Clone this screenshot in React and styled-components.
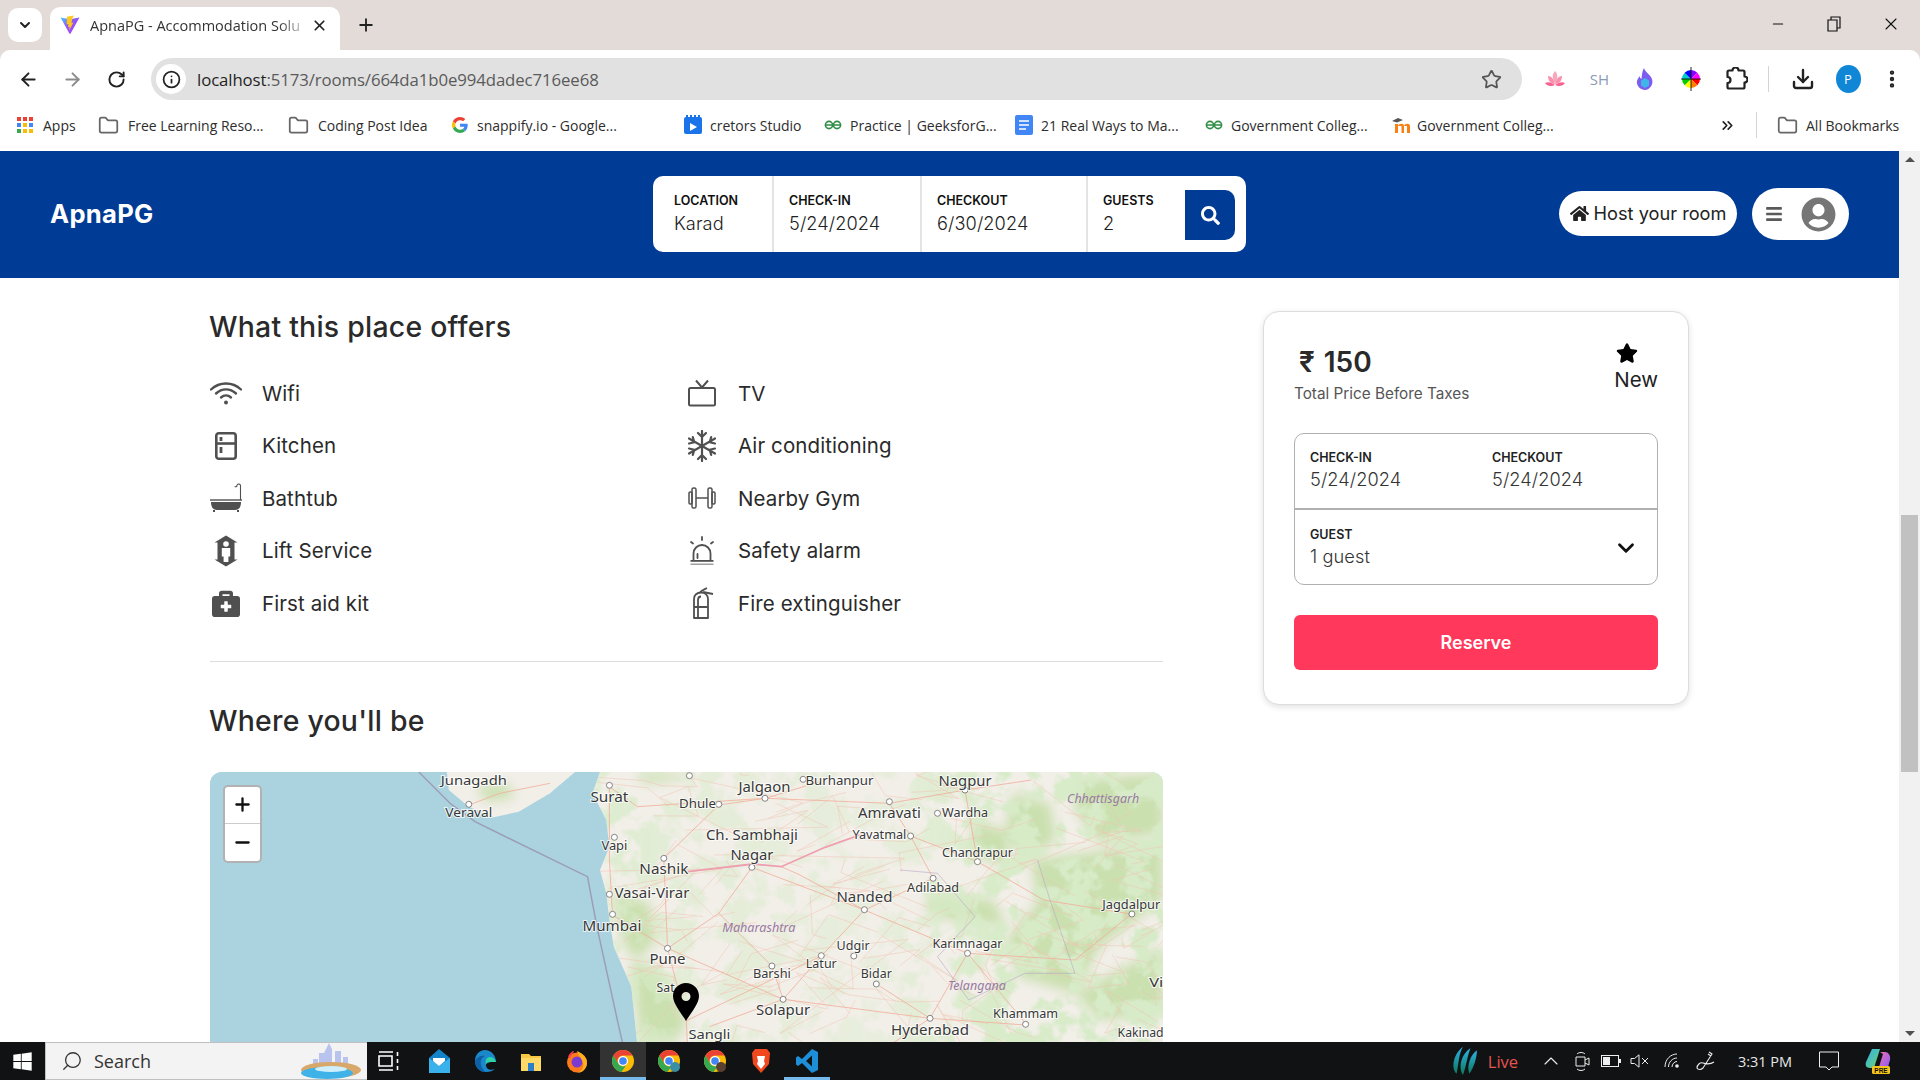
import React from "react";
import styled, { createGlobalStyle } from "styled-components";
import {
  ArrowLeft, ArrowRight, RotateCw, Star, Download, EllipsisVertical, X, Plus, ChevronDown,
  Folder, Info, Minus, ChevronsRight, ChevronUp, Search as SearchLine,
} from "lucide-react";
import { FaBriefcaseMedical, FaHome, FaSearch, FaStar, FaUserCircle, FaBars, FaWindows } from "react-icons/fa";

const Global = createGlobalStyle`
  html, body { margin: 0; padding: 0; width: 1920px; height: 1080px; overflow: hidden; background: #fff; }
  * { box-sizing: border-box; }
  #root { width: 1920px; height: 1080px; }
`;

const UI = `"Inter", "Noto Sans", sans-serif`;
const SYS = `"Open Sans", "Noto Sans", sans-serif`;

const Screen = styled.div`display:flex;flex-direction:column;width:1920px;height:1080px;overflow:hidden;`;

/* Browser chrome */
const TabStrip = styled.div`display:flex;height:50px;flex:none;background:#e3dbd8;`;
const TabMenu = styled.div`width:34px;height:34px;margin:8px 8px 0 8px;border-radius:10px;background:#fff;display:flex;align-items:center;justify-content:center;color:#222;`;
const Tab = styled.div`width:290px;height:43px;margin-top:7px;background:#fff;border-radius:10px 10px 0 0;display:flex;align-items:center;padding:0 12px 7px 10px;font:400 14.5px ${SYS};color:#333;`;
const TabTitle = styled.span`flex:1;margin-left:10px;white-space:nowrap;overflow:hidden;-webkit-mask-image:linear-gradient(90deg,#000 85%,transparent);mask-image:linear-gradient(90deg,#000 85%,transparent);`;
const NewTab = styled.div`width:26px;height:26px;margin:12px 0 0 13px;color:#222;display:flex;align-items:center;justify-content:center;`;
const WinControls = styled.div`margin-left:auto;display:flex;height:48px;`;
const WinBtn = styled.div`width:${p=>p.$w}px;display:flex;align-items:center;justify-content:center;color:#111;`;

const Toolbar = styled.div`height:56px;flex:none;display:flex;align-items:center;background:#e3dbd8;`;
const ToolbarInner = styled.div`flex:1;height:56px;background:#fff;border-radius:10px 10px 0 0;display:flex;align-items:center;padding:2px 0 0 6px;`;
const ToolBtn = styled.div`width:${p=>p.$w||45}px;flex:none;display:flex;align-items:center;justify-content:center;color:${p=>p.$c||"#222"};`;
const Address = styled.div`width:1371px;height:42px;margin:0 11px 0 12px;flex:none;background:#e1e1e1;border-radius:21px;display:flex;align-items:center;padding:0 20px 0 5px;color:#555;`;
const InfoDot = styled.div`width:30px;height:30px;border-radius:50%;background:#fff;display:flex;align-items:center;justify-content:center;color:#222;`;
const Url = styled.div`flex:1;margin-left:11px;font:400 16.8px ${SYS};letter-spacing:-.1px;color:#5a5a5a;white-space:nowrap;& b{font-weight:400;color:#1f1f1f;}`;
const ToolSep = styled.div`width:1px;height:26px;background:#d9d2d0;margin:0 ${p=>p.$m||0}px;flex:none;`;
const ExtText = styled.span`font:400 15px ${SYS};color:#8a9bb5;`;
const Avatar = styled.div`width:25px;height:28px;border-radius:50%;background:#0f86d6;color:#fff;font:500 13px ${SYS};display:flex;align-items:center;justify-content:center;`;

const BookmarkBar = styled.div`height:45px;flex:none;background:#fff;display:flex;align-items:center;padding:0 0 7px 16px;`;
const Bookmark = styled.div`width:${p=>p.$w}px;flex:none;display:flex;align-items:center;gap:${p=>p.$g||8}px;font:400 14px ${SYS};white-space:nowrap;margin-left:${p=>p.$ml||0}px;color:#2d2d2d;`;

/* page */
const Viewport = styled.div`height:891px;flex:none;display:flex;`;
const Page = styled.div`width:1899px;overflow:hidden;background:#fff;font-family:${UI};`;
const Scrollbar = styled.div`width:21px;background:#f1f1f1;display:flex;flex-direction:column;align-items:center;position:relative;`;
const ScrollArrow = styled.div`height:17px;display:flex;align-items:center;justify-content:center;width:100%;&::after{content:"";border-left:5px solid transparent;border-right:5px solid transparent;${p=>p.$down?"border-top":"border-bottom"}:5px solid #505050;}`;
const Thumb = styled.div`width:17px;height:257px;background:#c1c1c1;margin-top:347px;margin-bottom:auto;`;

const Header = styled.header`height:127px;background:#003b95;display:grid;grid-template-columns:1fr auto 1fr;align-items:center;padding:0 50px 1px;`;
const Logo = styled.div`font:700 25.6px ${UI};color:#fff;letter-spacing:.3px;margin-bottom:2px;`;
const SearchBar = styled.div`width:593px;height:76px;background:#fff;border-radius:10px;display:flex;align-items:stretch;position:relative;`;
const Field = styled.div`width:${p=>p.$w}px;flex:none;padding:17px 0 0 ${p=>p.$pl||15}px;border-right:${p=>p.$end?"none":"2px solid #e4e4e4"};`;
const Label = styled.div`font:600 12.5px/16px ${UI};color:#111;letter-spacing:0;`;
const Value = styled.div`font:300 18.2px/24px ${UI};color:#222;margin-top:2px;letter-spacing:.1px;`;
const SearchBtn = styled.div`width:50px;height:50px;margin:14px 0 0 0;border-radius:0 10px 10px 0;background:#003b95;color:#fff;display:flex;align-items:center;justify-content:center;`;
const HeadRight = styled.div`display:flex;justify-content:flex-end;align-items:center;gap:15px;`;
const HostBtn = styled.div`height:45px;width:178px;margin-bottom:1px;border-radius:23px;background:#fff;display:flex;align-items:center;justify-content:center;gap:5px;padding-bottom:1px;font:400 18.2px ${UI};color:#222;`;
const MenuBtn = styled.div`height:52px;width:97px;border-radius:26px;background:#fff;display:flex;align-items:center;justify-content:space-between;padding:0 13px 0 13px;color:#5a5a5a;`;

const Main = styled.main`width:1479px;margin:0 auto;display:grid;grid-template-columns:953px 426px;column-gap:100px;align-items:start;padding-top:31px;`;
const Left = styled.section``;
const Title = styled.h2`margin:0 0 0 -1px;font:500 28.4px/36px ${UI};letter-spacing:.25px;color:#2a2a2a;`;
const Amenities = styled.div`display:grid;grid-template-columns:476px 477px;grid-auto-rows:52.5px;margin:22px 0 31px;`;
const Amenity = styled.div`display:flex;align-items:center;font:400 20.5px ${UI};color:#2a2a2a;gap:20px;letter-spacing:.1px;`;
const IconCell = styled.span`width:32px;height:34px;flex:none;display:flex;align-items:center;justify-content:center;color:#505050;`;
const Rule = styled.hr`border:none;border-top:1px solid #ddd;margin:0 0 41px;`;
const MapBox = styled.div`position:relative;margin-top:33px;height:420px;border-radius:12px;overflow:hidden;background:#aad3df;`;
const MapSvg = styled.svg`display:block;width:953px;height:420px;`;
const ZoomCtl = styled.div`position:absolute;left:13px;top:13px;width:39px;border:2px solid rgba(0,0,0,.3);border-radius:5px;background:#fff;`;
const ZoomBtn = styled.div`height:37px;display:flex;align-items:center;justify-content:center;color:#111;border-bottom:${p=>p.$last?"none":"1px solid #ccc"};`;
const Pin = styled.svg`position:absolute;left:463px;top:211px;width:26px;height:38px;`;

const Card = styled.aside`margin-top:2px;height:394px;border:1px solid #ddd;border-radius:16px;box-shadow:0 2px 6px rgba(0,0,0,.12);padding:30px 30px 0;background:#fff;`;
const PriceRow = styled.div`display:flex;justify-content:space-between;align-items:flex-start;height:62px;`;
const Price = styled.div`font:600 28px/36px ${UI};color:#2a2a2a;padding:2px 0 0 5px;word-spacing:2px;`;
const PriceNote = styled.div`font:400 15.3px/22px ${UI};color:#555;margin-top:3px;`;
const NewBadge = styled.div`display:flex;flex-direction:column;align-items:flex-start;font:400 20.5px/26px ${UI};color:#222;padding-left:1px;`;
const StarBox = styled.div`margin:0 0 3px 2px;height:22px;color:#000;display:flex;`;
const Booking = styled.div`margin-top:29px;border:1px solid #b0b0b0;border-radius:10px;height:152px;`;
const Dates = styled.div`display:grid;grid-template-columns:182px 1fr;height:76px;border-bottom:2px solid #b0b0b0;padding:16px 0 0 15px;`;
const Guests = styled.div`display:flex;justify-content:space-between;align-items:center;height:74px;padding:1px 18px 0 15px;`;
const BookLabel = styled.div`font:600 12.5px/16px ${UI};color:#222;`;
const BookValue = styled.div`font:300 18.2px/24px ${UI};color:#333;margin-top:1px;letter-spacing:.1px;`;
const Reserve = styled.div`margin-top:30px;height:55px;border-radius:6px;background:#ff385c;color:#fff;font:600 18px ${UI};display:flex;align-items:center;justify-content:center;`;

/* taskbar */
const Taskbar = styled.div`height:38px;flex:none;background:#111213;display:flex;align-items:stretch;color:#eee;`;
const StartCell = styled.div`width:45px;display:flex;align-items:center;justify-content:center;color:#fff;`;
const SearchBox = styled.div`width:322px;margin-right:-1px;background:#f3f3f3;border:1px solid #bfbfbf;border-width:1px 0 1px 1px;display:flex;align-items:center;padding-left:15px;gap:11px;color:#333;font:400 18px ${SYS};position:relative;`;
const CityArt = styled.svg`position:absolute;right:6px;bottom:0;width:62px;height:38px;`;
const TaskCell = styled.div`width:${p=>p.$w||46}px;flex:none;margin-left:${p=>p.$ml||0}px;display:flex;align-items:center;justify-content:center;background:${p=>p.$active?"#333":"transparent"};box-shadow:${p=>p.$open?"inset 0 -3px 0 #76b9ed":"none"};`;
const Tray = styled.div`margin-left:auto;display:flex;padding-right:14px;`;
const LiveText = styled.span`font:400 16.5px ${SYS};color:#e8534f;`;
const TimeText = styled.span`font:400 14.5px ${SYS};color:#e8e8e8;`;

/* ---------- drawn icons ---------- */
const Ico = ({ w = 24, h = 24, vb, children, ...r }) => (
  <svg width={w} height={h} viewBox={vb || `0 0 ${w} ${h}`} fill="none" {...r}>{children}</svg>
);

const WifiI = () => (
  <Ico w={32} h={24}><g stroke="currentColor" strokeWidth="2.4" strokeLinecap="round"><path d="M1 8.500C9.500 .5 22.500 .5 31 8.500"/><path d="M6 12.500c6-5.500 14-5.500 20 0"/><path d="M11 16.500c3-2.600 7-2.600 10 0"/></g><circle cx="16" cy="21.500" r="2" fill="currentColor"/></Ico>
);
const KitchenI = () => (
  <Ico w={22} h={28}><rect x="1.300" y="1.300" width="19.400" height="25.400" rx="2.500" stroke="currentColor" strokeWidth="2.600"/><path d="M1 11.500h20" stroke="currentColor" strokeWidth="2.600"/><path d="M6 5v4M6 15v6" stroke="currentColor" strokeWidth="2.800"/></Ico>
);
const BathI = () => (
  <Ico w={32} h={32}><path d="M30.500 18V3.500c0-1.600-2.600-2-3.400-.5M27 3l-.4 2M26.500 5l-1.800-.6" stroke="currentColor" strokeWidth="1.100"/><path d="M0 17h32v2H0z" fill="currentColor" opacity=".7"/><path d="M1 20h30c0 5-2 8-6 8H7c-4 0-6-3-6-8z" fill="currentColor"/><path d="M4 28v2M28 28v2" stroke="currentColor" strokeWidth="2"/></Ico>
);
const LiftI = () => (
  <Ico w={24} h={32}><path d="M12 .5 23.500 7.500H20.500v17h3L12 31.500.5 24.500h3v-17h-3z" fill="currentColor"/><circle cx="12" cy="9" r="2.800" fill="#fff"/><path d="M7.800 13h8.400v8.500h-1.800v5.500h-4.800v-5.500H7.800z" fill="#fff"/></Ico>
);
const TvI = () => (
  <Ico w={28} h={28}><rect x="1" y="9" width="26" height="17.500" rx="1.500" stroke="currentColor" strokeWidth="2"/><path d="M8 1.500l6 7 6-7" stroke="currentColor" strokeWidth="2"/></Ico>
);
const SnowI = () => (
  <Ico w={30} h={32}><g stroke="currentColor" strokeWidth="2.200" strokeLinecap="round"><path d="M15 16V1M11 3l4 4 4-4"/><path d="M15 16V31M11 29l4-4 4 4"/><path d="M15 16 2 8.500M2 13.500l5.300-1.200L5.800 7"/><path d="M15 16 28 8.500M28 13.500l-5.300-1.200L24.200 7"/><path d="M15 16 2 23.500M2 18.500l5.300 1.200L5.800 25"/><path d="M15 16 28 23.500M28 18.500l-5.300 1.200L24.200 25"/></g></Ico>
);
const GymI = () => (
  <Ico w={28} h={22}><g stroke="currentColor" strokeWidth="1.500"><rect x="4" y="1" width="4" height="20" rx="1.600"/><rect x="20" y="1" width="4" height="20" rx="1.600"/><rect x="1" y="5" width="3" height="12" rx="1.200"/><rect x="24" y="5" width="3" height="12" rx="1.200"/><path d="M8 11h12"/></g></Ico>
);
const SirenI = () => (
  <Ico w={26} h={30}><g stroke="currentColor" strokeWidth="1.800" strokeLinecap="round"><path d="M13 1v3M2 6l2 1.500M24 6l-2 1.500"/><path d="M4.500 24v-6.500a8.500 8.500 0 0 1 17 0V24"/><path d="M8.500 22v-4"/></g><path d="M1.500 24h23v1.800h-23z" fill="currentColor"/><path d="M1.500 27.500h23v1.500h-23z" fill="currentColor" opacity=".55"/></Ico>
);
const FireI = () => (
  <Ico w={24} h={32}><g stroke="currentColor" strokeWidth="1.800"><path d="M4 31V12c0-4 3-6.500 7-6.500S18 8 18 12v19z" strokeLinejoin="round"/><path d="M8 31V13c0-2 1.200-3.500 3-3.500M4 20h14"/><path d="M10 5.500C12 3 15 2 17 1M13 5l10 2"/></g></Ico>
);

const Vite = () => (
  <Ico w={20} h={20}><path d="M.5 2.600 9.400 18.600c.3.5 1 .5 1.200 0L19.500 2.600 10 4.300z" fill="url(#vt)"/><path d="M13.800.5 7 1.800l-.4 7.600 1.900-.4-.5 3.300 1.700-.5-.7 4 4.400-8.300-2 .4 1-4.300z" fill="#ffc71e"/><defs><linearGradient id="vt" x1="0" y1="0" x2="1" y2="1"><stop stopColor="#41d1ff"/><stop offset=".4" stopColor="#8b5cf6"/><stop offset="1" stopColor="#bd34fe"/></linearGradient></defs></Ico>
);
const AppsI = () => {
  const c = ["#ea4335","#ea4335","#ea4335","#4285f4","#fbbc05","#4285f4","#34a853","#fbbc05","#fbbc05"];
  return <Ico w={18} h={18}>{c.map((f,i)=><rect key={i} x={1+(i%3)*6} y={1+Math.floor(i/3)*6} width="4" height="4" fill={f}/>)}</Ico>;
};
const GoogleI = () => (
  <Ico w={16} h={16} vb="0 0 48 48"><path fill="#EA4335" d="M24 9.500c3.500 0 6.700 1.200 9.200 3.600l6.900-6.900C35.900 2.400 30.500 0 24 0 14.600 0 6.500 5.400 2.600 13.200l8 6.200C12.500 13.700 17.800 9.500 24 9.500z"/><path fill="#4285F4" d="M47 24.500c0-1.600-.1-3.100-.4-4.500H24v9h12.900c-.6 3-2.200 5.500-4.700 7.200l7.700 6C44.400 37.600 47 31.600 47 24.500z"/><path fill="#FBBC05" d="M10.600 28.600A14.500 14.500 0 0 1 10.600 19.400l-8-6.200a24 24 0 0 0 0 21.600z"/><path fill="#34A853" d="M24 48c6.500 0 11.900-2.100 15.900-5.800l-7.700-6c-2.200 1.500-4.900 2.300-8.200 2.300-6.200 0-11.500-4.200-13.400-9.900l-8 6.200C6.500 42.600 14.600 48 24 48z"/></Ico>
);
const CretorsI = () => (
  <Ico w={18} h={20}><rect y="2" width="18" height="17" rx="2" fill="#1a73e8"/><path d="M2 0h2v3H2zM6 0h2v3H6zM10 0h2v3h-2zM14 0h2v3h-2z" fill="#1a73e8"/><path d="M6 8l7 4-7 4z" fill="#fff"/></Ico>
);
const GfgI = () => (
  <Ico w={18} h={12}><g stroke="#2f8d46" strokeWidth="1.600"><path d="M9 6h8M9 6H1"/><circle cx="5" cy="6" r="3.600"/><circle cx="13" cy="6" r="3.600"/></g></Ico>
);
const DocI = () => (
  <Ico w={20} h={20}><rect x="1" width="18" height="20" rx="2" fill="#4285f4"/><path d="M5 6h10M5 10h10M5 14h7" stroke="#fff" strokeWidth="1.600"/></Ico>
);
const MoodleI = () => (
  <Ico w={19} h={16}><path d="M6 7v9H3V7zM6 9c1-3 6-3 6 0v7H9.500V9M12 9c1-3 6-3 6 0v7h-3V9" fill="#f98012"/><path d="M0 4l6-3 5 2-6 2.500z" fill="#555"/></Ico>
);
const LotusI = () => (
  <Ico w={20} h={18}><path d="M10 1c3 3 3 8 0 12-3-4-3-9 0-12z" fill="#f9a6bd"/><path d="M3 6c4 0 6 4 7 8-4 0-7-3-7-8zM17 6c-4 0-6 4-7 8 4 0 7-3 7-8z" fill="#fb8fae"/><path d="M0 13c4-2 7 0 10 2-4 2-8 1-10-2zM20 13c-4-2-7 0-10 2 4 2 8 1 10-2z" fill="#f8618f"/></Ico>
);
const FlameI = () => (
  <Ico w={18} h={22}><path d="M8 0c1 4 6 6 8 11 2 6-3 11-7 11S0 18 1 13c.5-2 2-4 2.500-5 .5 2 1 2.500 2 3C6 7 6 3 8 0z" fill="#7d5cf0"/><path d="M9 10l4 2.500v5L9 20l-4-2.500v-5z" fill="#3fb6e8"/></Ico>
);
const WheelI = () => {
  const c = ["#f00","#ff8000","#ff0","#0c0","#0cc","#00f","#80f","#f0f"];
  return (
    <Ico w={20} h={24} vb="-10 -12 20 24">
      {c.map((f,i)=>{const a=i*Math.PI/4,b=(i+1)*Math.PI/4;return <path key={i} d={`M0 0L${9*Math.cos(a)} ${9*Math.sin(a)}A9 9 0 0 1 ${9*Math.cos(b)} ${9*Math.sin(b)}Z`} fill={f}/>;})}
      <path d="M0-12V12M-10 0H10" stroke="#111" strokeWidth=".9"/>
    </Ico>
  );
};
const ExtPuzzleI = () => (
  <Ico w={24} h={24}><path d="M8.500 3.500a3 3 0 0 1 6 0H19a1.500 1.500 0 0 1 1.500 1.500v4.500a3 3 0 0 1 0 6V20a1.500 1.500 0 0 1-1.500 1.500H5A1.500 1.500 0 0 1 3.500 20v-4a3 3 0 0 0 0-6V5A1.500 1.500 0 0 1 5 3.500z" stroke="#222" strokeWidth="2.200" strokeLinejoin="round"/></Ico>
);
const RestoreI = () => (
  <Ico w={14} h={16}><path d="M1 4h9v11H1zM4 4V1h9v11h-3" stroke="currentColor" strokeWidth="1.200"/></Ico>
);

/* taskbar icons */
const TaskViewI = () => (<Ico w={22} h={22}><path d="M1 2h14M1 20h14M1 6h13v10H1zM19.500 2v4M19.500 9v4M19.500 16v4" stroke="#fff" strokeWidth="1.600"/></Ico>);
const MailI = () => (<Ico w={22} h={24}><path d="M11 0 22 9v15H1V9z" fill="#1283c9"/><path d="M1 9l10 8 11-8v15H1z" fill="#39b1ea"/><path d="M5 9h12v3l-6 5-6-5z" fill="#fff"/></Ico>);
const EdgeI = () => (<Ico w={22} h={24}><path d="M11 1C5 1 1 6 1 12s4 11 11 11c4 0 7-1 9-3-5 2-9 0-9-4 0-2 3-3 6-3h4C22 6 17 1 11 1z" fill="#1b88c9"/><path d="M1 12C3 8 7 6 11 7c-3 1-5 4-4 9 .5 3 3 6 5 7-6 0-11-5-11-11z" fill="#0f5ea8"/><path d="M12 16c0-3 3-3 6-3h4c0-2-3-5-6-5-4 0-5 4-4 8z" fill="#2ed3a7"/></Ico>);
const FilesI = () => (<Ico w={22} h={22}><path d="M1 4h8l2 2h10v15H1z" fill="#f7c844"/><path d="M1 8h20v13H1z" fill="#ffd968"/><path d="M8 13h6v8H8z" fill="#2a7fcd"/></Ico>);
const FoxI = () => (<Ico w={24} h={24}><circle cx="12" cy="13.500" r="10" fill="#ff7a1a"/><circle cx="12" cy="13" r="5.500" fill="#7b3bd1"/><path d="M12 2c4 2 10 5 10 12 0 6-5 10-10 10 5-2 7-6 6-10-1-5-5-7-6-12z" fill="#ffb01f"/><path d="M3 8C5 3 8 2 9 2 8 5 6 6 5 9z" fill="#ff3d4f"/></Ico>);
const ChromeI = ({ badge }) => (
  <Ico w={24} h={24} vb="-12 -12 24 24">
    <circle r="11" fill="#fbbc05"/>
    <path d="M0-11A11 11 0 0 1 9.500-5.500H0A5.500 5.500 0 0 0-5 2.500L-9.500-5.500A11 11 0 0 1 0-11z" fill="#ea4335"/>
    <path d="M-9.500-5.500-4.500 3A5.500 5.500 0 0 0 3 4.500L-1.500 10.900A11 11 0 0 1-9.500-5.500z" fill="#34a853"/>
    <circle r="5" fill="#fff"/><circle r="3.800" fill="#4285f4"/>
    {badge && <circle cx="6" cy="6" r="5" fill={badge}/>}
  </Ico>
);
const BraveI = () => (<Ico w={22} h={26}><path d="M5 1h12l3 4-1 11-8 9-8-9L2 5z" fill="#f1481f"/><path d="M7 8h8l-1 5 1 3-4 5-4-5 1-3z" fill="#fff"/></Ico>);
const VsI = () => (<Ico w={22} h={24}><path d="M16 0 22 3v18l-6 3L6 14l-4 3-2-1.500V8.500L2 7l4 3zM16 6.500 10 12l6 5.500z" fill="#1c8fd8"/></Ico>);
const IccI = () => (<Ico w={30} h={30} vb="0 0 28 28"><g fill="url(#ic)"><path d="M8 26C2 20 6 6 14 1c-4 6-4 16-6 25z"/><path d="M14 27C9 19 13 7 21 2c-3 7-4 17-7 25z"/><path d="M20 26c-3-7 1-18 7-22 0 7-3 16-7 22z"/></g><defs><linearGradient id="ic" x1="0" y1="0" x2="0" y2="1"><stop stopColor="#2fb0e6"/><stop offset="1" stopColor="#0b7a5e"/></linearGradient></defs></Ico>);
const MeetI = () => (<Ico w={16} h={20}><path d="M2 6h9v9H2zM11 9l4-2v7l-4-2M3 3c2-2 6-2 8 0M3 18c2 2 6 2 8 0" stroke="#eee" strokeWidth="1"/></Ico>);
const BattI = () => (<Ico w={20} h={12}><rect x=".5" y=".5" width="17" height="11" stroke="#eee"/><rect x="2" y="2" width="7" height="8" fill="#eee"/><rect x="18" y="4" width="2" height="4" fill="#eee"/></Ico>);
const VolI = () => (<Ico w={20} h={14}><path d="M1 4.500h3.500L9 .8v12.400L4.500 9.500H1zM12 4l6 6M18 4l-6 6" stroke="#eee" strokeWidth="1"/></Ico>);
const NetI = () => (<Ico w={16} h={16}><path d="M1 14C1 6 7 1 13 1M4.500 14c0-5 4-9 8.500-9M8 14c0-3 2.500-5.500 5-5.500" stroke="#eee" strokeWidth="1"/><circle cx="13" cy="13" r="1.800" fill="#eee"/></Ico>);
const PenI = () => (<Ico w={20} h={20}><path d="M14 1l3 2-9 14c-2 2-5 2-6 0 0-3 3-6 6-5 3 1 8 1 11-1M13 3l3 2" stroke="#eee" strokeWidth="1.100"/></Ico>);
const NotifI = () => (<Ico w={20} h={20}><path d="M.5 1h19v15H13l-3 3-3-3H.5z" stroke="#eee"/></Ico>);
const CopilotI = () => (
  <Ico w={26} h={26}>
    <path d="M7 1h8L9 20H5C1 20 0 17 1 14z" fill="url(#cp1)"/>
    <path d="M15 4h5c3 0 6 3 5 8l-2 7h-9l4-13z" fill="url(#cp2)"/>
    <rect x="7" y="18" width="18" height="8" rx="1.500" fill="#f5c518"/>
    <text x="16" y="24.800" textAnchor="middle" fontFamily="Liberation Sans, sans-serif" fontWeight="700" fontSize="6.500" fill="#111">PRE</text>
    <defs>
      <linearGradient id="cp1" x1="0" y1="0" x2="1" y2="1"><stop stopColor="#2fb2f0"/><stop offset="1" stopColor="#6fd16a"/></linearGradient>
      <linearGradient id="cp2" x1="0" y1="0" x2="1" y2="1"><stop stopColor="#f06fb5"/><stop offset="1" stopColor="#8a5cf5"/></linearGradient>
    </defs>
  </Ico>
);

/* ---------- map ---------- */
const px = (x) => +(x / 1.6 - 10).toFixed(1);
const py = (y) => +(y / 3 - 12).toFixed(1);
const pts = (a) => a.map(([x, y]) => `${px(x)},${py(y)}`).join(" ");

const land = [[600,36],[640,36],[628,100],[650,180],[655,260],[640,330],[650,400],[655,480],[662,560],[690,680],[700,860],[700,1300],[1700,1300],[1700,36]];
const gujarat = [[395,36],[398,90],[430,140],[470,172],[510,155],[560,100],[600,36]];
const greens = [
  [[440,80],[490,70],[505,110],[460,125]],
  [[660,400],[720,430],[730,540],[700,600],[680,560]],
  [[690,600],[740,640],[780,780],[760,846],[705,846],[695,700]],
  [[700,40],[780,40],[760,60],[710,70]],
  [[1170,400],[1270,420],[1290,500],[1200,480],[1160,450]],
  [[1240,180],[1300,220],[1290,320],[1230,280]],
  [[1300,100],[1360,130],[1370,240],[1320,300],[1290,200]],
  [[1330,300],[1541,250],[1541,420],[1440,560],[1400,700],[1310,650],[1290,540],[1340,430]],
  [[1400,60],[1541,40],[1541,220],[1440,250],[1400,150]],
  [[1400,700],[1541,560],[1541,760],[1440,780]],
];

/* seeded minor-road scatter */
const minorRoads = (() => {
  let s = 12345;
  const r = () => (s = (s * 16807) % 2147483647) / 2147483647;
  const out = [];
  for (let i = 0; i < 130; i++) {
    const x = 680 + r() * 860, y = 40 + r() * 810;
    out.push([[x, y], [x + (r() - .5) * 170, y + (r() - .5) * 170], [x + (r() - .5) * 300, y + (r() - .5) * 300]]);
  }
  return out;
})();

const roads = [
  [[655,80],[700,140],[780,130],[905,115],[1000,60]],
  [[830,135],[905,115],[1103,130],[1224,90],[1330,60]],
  [[742,295],[830,135]],
  [[742,295],[748,565],[660,465]],
  [[883,322],[830,460],[748,565]],
  [[883,322],[1063,450],[1228,580],[1321,790]],
  [[930,320],[960,345],[1063,450]],
  [[1137,228],[1244,305],[1224,90]],
  [[1103,130],[1137,228],[1173,355],[1063,450]],
  [[748,565],[933,718],[1168,775],[1321,795]],
  [[830,460],[915,618],[933,718]],
  [[994,588],[933,718]],
  [[1063,450],[994,588],[778,782]],
  [[1082,672],[1168,775],[1228,580]],
  [[748,565],[778,782],[780,860]],
  [[933,718],[815,800]],
  [[1244,305],[1350,420],[1490,462]],
  [[1228,580],[1400,600],[1490,462]],
  [[660,465],[655,300],[655,80]],
  [[1168,775],[1100,860]],
  [[430,135],[480,100],[560,70]],
];
const labels = [
  ["Junagadh",438,66,12,66], ["Veraval",430,160,12,47], ["Surat",655,115,14,38], ["Jalgaon",903,83,14.5,52],
  ["Burhanpur",1023,66,12.5,68], ["Nagpur",1224,66,14.5,53], ["Dhule",796,133,12.5,37], ["Amravati",1103,162,14.5,63],
  ["Wardha",1224,162,12.5,46], ["Ch. Sambhaji",883,228,14.5,92], ["Nagar",883,287,14.5,43], ["Yavatmal",1087,227,12,54],
  ["Vapi",663,260,12,26], ["Chandrapur",1244,280,12,71], ["Nashik",742,330,14.5,49], ["Adilabad",1173,387,12,52],
  ["Vasai-Virar",723,403,14,75], ["Nanded",1063,413,14.5,56], ["Jagdalpur",1490,437,12,58], ["Mumbai",659,502,15,59],
  ["Udgir",1045,560,12.5,33], ["Karimnagar",1228,553,12,70], ["Pune",748,600,14,36], ["Latur",994,615,12.5,31],
  ["Barshi",915,643,12.5,38], ["Bidar",1082,645,12.5,31], ["Sat",745,686,12.5,18], ["Solapur",933,755,14,54],
  ["Hyderabad",1168,812,14.5,78], ["Khammam",1321,765,12,65], ["Kakinad",1505,820,12,46], ["Sangli",815,828,13,42], ["Vi",1530,672,13,14],
];
const stateLabels = [["Chhattisgarh",1445,120,72],["Maharashtra",894,507,73],["Telangana",1243,680,58]];
const cityDots = [[655,76],[430,133],[904,115],[965,58],[1103,125],[1224,90],[1180,160],[830,133],[1137,228],[663,232],[742,295],[883,322],[1244,305],[1173,355],[655,403],[660,463],[1063,449],[1491,462],[748,565],[994,587],[915,618],[1046,588],[1228,580],[1082,672],[933,718],[1168,775],[1321,793],[783,47]];

const MapArt = () => (
  <MapSvg viewBox="0 0 953 420">
    <defs>
      <filter id="soft" x="-20%" y="-20%" width="140%" height="140%"><feGaussianBlur stdDeviation="6"/></filter>
      <filter id="patch" x="0" y="0" width="100%" height="100%">
        <feTurbulence type="fractalNoise" baseFrequency=".035" numOctaves="4" seed="11"/>
        <feColorMatrix values="0 0 0 0 .68  0 0 0 0 .83  0 0 0 0 .58  7 0 0 0 -3.100"/>
        <feGaussianBlur stdDeviation=".6"/>
      </filter>
      <linearGradient id="east" x1="0" y1="0" x2="1" y2="0">
        <stop offset="0" stopColor="#fff" stopOpacity=".85"/>
        <stop offset=".14" stopColor="#fff" stopOpacity=".55"/>
        <stop offset=".5" stopColor="#fff" stopOpacity=".35"/>
        <stop offset=".7" stopColor="#fff" stopOpacity=".95"/>
        <stop offset="1" stopColor="#fff" stopOpacity="1"/>
      </linearGradient>
      <mask id="eastMask"><rect x="380" width="573" height="420" fill="url(#east)"/></mask>
      <clipPath id="landClip"><polygon points={pts(land)}/><polygon points={pts(gujarat)}/></clipPath>
    </defs>
    <rect width="953" height="420" fill="#aad3df"/>
    <polygon points={pts(land)} fill="#f2efe9"/>
    <polygon points={pts(gujarat)} fill="#f2efe9"/>
    <g clipPath="url(#landClip)">
      <g filter="url(#soft)" fill="#c3dda4" opacity=".85">
        {greens.map((g,i)=><polygon key={i} points={pts(g)}/>)}
      </g>
      <g mask="url(#eastMask)"><rect width="953" height="420" filter="url(#patch)"/></g>
      <g fill="none" stroke="#f2c5b4" strokeWidth=".6" opacity=".85">
        {minorRoads.map((r,i)=><polyline key={i} points={pts(r)}/>)}
      </g>
    </g>
    <g fill="none" stroke="#f2ae9a" strokeWidth=".9" opacity=".9">
      {roads.map((r,i)=><polyline key={i} points={pts(r)}/>)}
    </g>
    <polyline points={pts([[780,335],[885,312],[930,320],[1000,262],[1060,222]])} fill="none" stroke="#ee9eae" strokeWidth="1.800"/>
    <polyline points={pts([[1120,330],[1180,340],[1240,470],[1180,590],[1230,720],[1320,640],[1400,640],[1360,420],[1340,300]])} fill="none" stroke="#b9a9c4" strokeWidth="1" opacity=".6"/>
    <polyline points={pts([[350,36],[400,130],[440,185],[620,350],[635,500],[670,800],[680,880]])} fill="none" stroke="#9d9db8" strokeWidth="1.500"/>
    <g fill="#fff" stroke="#777" strokeWidth=".9">
      {cityDots.map(([x,y],i)=><circle key={i} cx={px(x)} cy={py(y)} r="3"/>)}
    </g>
    <g fontFamily='"Noto Sans", sans-serif' fill="#383838" stroke="#fff" strokeWidth="2" paintOrder="stroke" strokeOpacity=".75" textAnchor="middle" dominantBaseline="middle">
      {labels.map(([t,x,y,s,l])=><text key={t} x={px(x)} y={py(y)} fontSize={s} textLength={l} lengthAdjust="spacingAndGlyphs">{t}</text>)}
    </g>
    <g fontFamily='"Noto Sans", sans-serif' fontStyle="italic" fill="#9a7aa3" fontSize="12" textAnchor="middle" dominantBaseline="middle">
      {stateLabels.map(([t,x,y,l])=><text key={t} x={px(x)} y={py(y)} textLength={l} lengthAdjust="spacingAndGlyphs">{t}</text>)}
    </g>
  </MapSvg>
);

const bookmarks = [
  { w: 64, i: <AppsI/>, t: "Apps", g: 9 },
  { w: 190, ml: 18, i: <Folder size={21} color="#666"/>, t: "Free Learning Reso...", g: 9 },
  { w: 164, i: <Folder size={21} color="#666"/>, t: "Coding Post Idea", g: 9 },
  { w: 232, i: <GoogleI/>, t: "snappify.io - Google...", g: 9 },
  { w: 140, i: <CretorsI/>, t: "cretors Studio", g: 8 },
  { w: 190, i: <GfgI/>, t: "Practice | GeeksforG...", g: 8 },
  { w: 191, i: <DocI/>, t: "21 Real Ways to Ma...", g: 7 },
  { w: 187, i: <GfgI/>, t: "Government Colleg...", g: 8 },
  { w: 326, i: <MoodleI/>, t: "Government Colleg...", g: 6 },
];

const offers = [
  [<WifiI/>, "Wifi"], [<TvI/>, "TV"],
  [<KitchenI/>, "Kitchen"], [<SnowI/>, "Air conditioning"],
  [<BathI/>, "Bathtub"], [<GymI/>, "Nearby Gym"],
  [<LiftI/>, "Lift Service"], [<SirenI/>, "Safety alarm"],
  [<FaBriefcaseMedical size={28}/>, "First aid kit"], [<FireI/>, "Fire extinguisher"],
];

export default function App() {
  return (
    <Screen>
      <Global/>
      <TabStrip>
        <TabMenu><ChevronDown size={16} strokeWidth={3}/></TabMenu>
        <Tab>
          <Vite/>
          <TabTitle>ApnaPG - Accommodation Solu</TabTitle>
          <X size={17} strokeWidth={2.4} color="#222"/>
        </Tab>
        <NewTab><Plus size={20} strokeWidth={2.2}/></NewTab>
        <WinControls>
          <WinBtn $w={56}><Minus size={16} strokeWidth={1.6}/></WinBtn>
          <WinBtn $w={56}><RestoreI/></WinBtn>
          <WinBtn $w={58}><X size={20} strokeWidth={1.3}/></WinBtn>
        </WinControls>
      </TabStrip>
      <Toolbar>
        <ToolbarInner>
          <ToolBtn $w={44}><ArrowLeft size={21} strokeWidth={2.2}/></ToolBtn>
          <ToolBtn $w={44} $c="#8c8c8c"><ArrowRight size={21} strokeWidth={2.2}/></ToolBtn>
          <ToolBtn><RotateCw size={19} strokeWidth={2.4}/></ToolBtn>
          <Address>
            <InfoDot><Info size={19} strokeWidth={2.2}/></InfoDot>
            <Url><b>localhost</b>:5173/rooms/664da1b0e994dadec716ee68</Url>
            <Star size={21} strokeWidth={2}/>
          </Address>
          <ToolBtn $w={44}><LotusI/></ToolBtn>
          <ToolBtn><ExtText>SH</ExtText></ToolBtn>
          <ToolBtn $w={46}><FlameI/></ToolBtn>
          <ToolBtn><WheelI/></ToolBtn>
          <ToolBtn $w={46}><ExtPuzzleI/></ToolBtn>
          <ToolSep $m={9}/>
          <ToolBtn $w={50}><Download size={24} strokeWidth={2.4}/></ToolBtn>
          <ToolBtn $w={40}><Avatar>P</Avatar></ToolBtn>
          <ToolBtn $w={48}><EllipsisVertical size={22} strokeWidth={2.8}/></ToolBtn>
        </ToolbarInner>
      </Toolbar>
      <BookmarkBar>
        {bookmarks.map((b,i)=>(
          <Bookmark key={i} $w={b.w} $ml={b.ml} $g={b.g}>{b.i}{b.t}</Bookmark>
        ))}
        <ToolBtn $w={18} $c="#222"><ChevronsRight size={17} strokeWidth={2.4}/></ToolBtn>
        <ToolSep $m={20}/>
        <Bookmark $w={130} $g={8}><Folder size={21} color="#666"/>All Bookmarks</Bookmark>
      </BookmarkBar>

      <Viewport>
        <Page>
          <Header>
            <Logo>ApnaPG</Logo>
            <SearchBar>
              <Field $w={121} $pl={21}><Label>LOCATION</Label><Value>Karad</Value></Field>
              <Field $w={148}><Label>CHECK-IN</Label><Value>5/24/2024</Value></Field>
              <Field $w={166}><Label>CHECKOUT</Label><Value>6/30/2024</Value></Field>
              <Field $w={97} $end><Label>GUESTS</Label><Value>2</Value></Field>
              <SearchBtn><FaSearch size={19}/></SearchBtn>
            </SearchBar>
            <HeadRight>
              <HostBtn><FaHome size={19}/>Host your room</HostBtn>
              <MenuBtn><FaBars size={18}/><FaUserCircle size={35} color="#767676"/></MenuBtn>
            </HeadRight>
          </Header>
          <Main>
            <Left>
              <Title>What this place offers</Title>
              <Amenities>
                {offers.map(([ic,t])=>(
                  <Amenity key={t}><IconCell>{ic}</IconCell>{t}</Amenity>
                ))}
              </Amenities>
              <Rule/>
              <Title>Where you'll be</Title>
              <MapBox>
                <MapArt/>
                <ZoomCtl>
                  <ZoomBtn><Plus size={21} strokeWidth={2.6}/></ZoomBtn>
                  <ZoomBtn $last><Minus size={21} strokeWidth={2.6}/></ZoomBtn>
                </ZoomCtl>
                <Pin viewBox="0 0 26 38"><path fillRule="evenodd" d="M13 0c7 0 13 5.500 13 13 0 8-9 18-13 25C9 31 0 21 0 13 0 5.500 6 0 13 0zm0 9a4.500 4.500 0 1 0 0 9 4.500 4.500 0 0 0 0-9z" fill="#000"/></Pin>
              </MapBox>
            </Left>
            <Card>
              <PriceRow>
                <div>
                  <Price>₹ 150</Price>
                  <PriceNote>Total Price Before Taxes</PriceNote>
                </div>
                <NewBadge><StarBox><FaStar size={22}/></StarBox>New</NewBadge>
              </PriceRow>
              <Booking>
                <Dates>
                  <div><BookLabel>CHECK-IN</BookLabel><BookValue>5/24/2024</BookValue></div>
                  <div><BookLabel>CHECKOUT</BookLabel><BookValue>5/24/2024</BookValue></div>
                </Dates>
                <Guests>
                  <div><BookLabel>GUEST</BookLabel><BookValue>1 guest</BookValue></div>
                  <ChevronDown size={26} strokeWidth={2.6} color="#111"/>
                </Guests>
              </Booking>
              <Reserve>Reserve</Reserve>
            </Card>
          </Main>
        </Page>
        <Scrollbar>
          <ScrollArrow/>
          <Thumb/>
          <ScrollArrow $down/>
        </Scrollbar>
      </Viewport>

      <Taskbar>
        <StartCell><FaWindows size={21}/></StartCell>
        <SearchBox>
          <SearchLine size={22} strokeWidth={1.4} style={{ transform: "scaleX(-1)" }}/>
          Search
          <CityArt viewBox="0 0 62 38">
            <path d="M30 2l3 6v16h-8V12zM20 12h6v12h-6zM36 10h6v14h-6zM44 16h5v8h-5zM14 18h5v6h-5z" fill="#b9c4ee"/>
            <ellipse cx="32" cy="29" rx="30" ry="8" fill="#d8a86a"/>
            <ellipse cx="28" cy="32" rx="26" ry="6" fill="#3fb3e8"/>
            <ellipse cx="32" cy="28" rx="16" ry="3" fill="#cdeefb"/>
          </CityArt>
        </SearchBox>
        <TaskCell><TaskViewI/></TaskCell>
        <TaskCell $ml={4}><MailI/></TaskCell>
        <TaskCell><EdgeI/></TaskCell>
        <TaskCell><FilesI/></TaskCell>
        <TaskCell><FoxI/></TaskCell>
        <TaskCell $active $open><ChromeI/></TaskCell>
        <TaskCell><ChromeI badge="#3a8fa3"/></TaskCell>
        <TaskCell><ChromeI badge="#5a4030"/></TaskCell>
        <TaskCell><BraveI/></TaskCell>
        <TaskCell $open><VsI/></TaskCell>
        <Tray>
          <TaskCell $w={36}><IccI/></TaskCell>
          <TaskCell $w={44}><LiveText>Live</LiveText></TaskCell>
          <TaskCell $w={30} $ml={11}><ChevronUp size={24} strokeWidth={1.1} color="#eee"/></TaskCell>
          <TaskCell $w={32}><MeetI/></TaskCell>
          <TaskCell $w={26}><BattI/></TaskCell>
          <TaskCell $w={32}><VolI/></TaskCell>
          <TaskCell $w={32}><NetI/></TaskCell>
          <TaskCell $w={34}><PenI/></TaskCell>
          <TaskCell $w={86}><TimeText>3:31 PM</TimeText></TaskCell>
          <TaskCell $w={42}><NotifI/></TaskCell>
          <TaskCell $w={56}><CopilotI/></TaskCell>
        </Tray>
      </Taskbar>
    </Screen>
  );
}
